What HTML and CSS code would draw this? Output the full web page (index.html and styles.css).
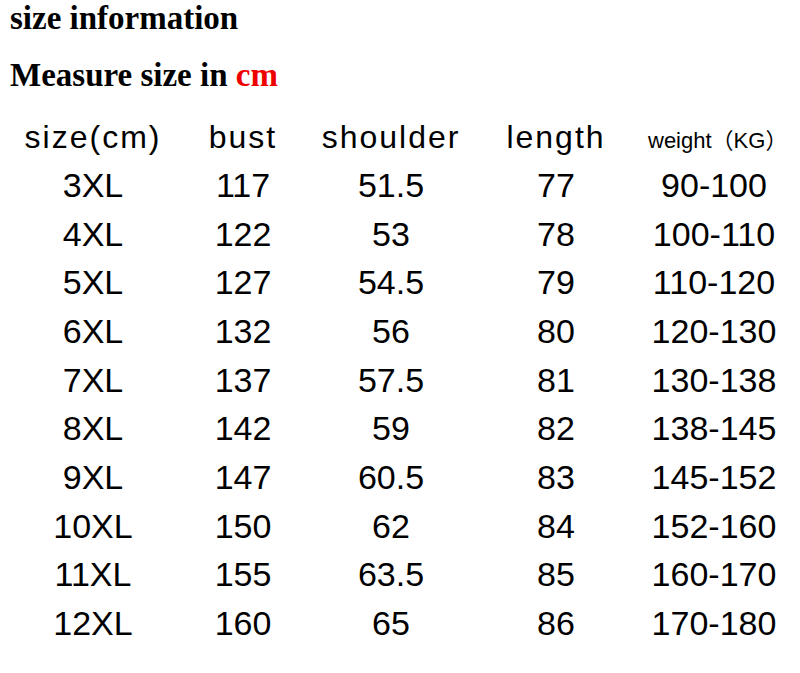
FILE: index.html
```html
<!DOCTYPE html>
<html>
<head>
<meta charset="utf-8">
<link rel="stylesheet" href="styles.css">
</head>
<body>
<h1 class="title">size information</h1>
<h2 class="title title-second">Measure size in <span class="red">cm</span></h2>
<div class="table">
  <div class="row head">
    <div class="cell">size(cm)</div>
    <div class="cell">bust</div>
    <div class="cell">shoulder</div>
    <div class="cell">length</div>
    <div class="cell weight">weight（KG）</div>
  </div>
  <div class="row"><div class="cell">3XL</div><div class="cell">117</div><div class="cell">51.5</div><div class="cell">77</div><div class="cell">90-100</div></div>
  <div class="row"><div class="cell">4XL</div><div class="cell">122</div><div class="cell">53</div><div class="cell">78</div><div class="cell">100-110</div></div>
  <div class="row"><div class="cell">5XL</div><div class="cell">127</div><div class="cell">54.5</div><div class="cell">79</div><div class="cell">110-120</div></div>
  <div class="row"><div class="cell">6XL</div><div class="cell">132</div><div class="cell">56</div><div class="cell">80</div><div class="cell">120-130</div></div>
  <div class="row"><div class="cell">7XL</div><div class="cell">137</div><div class="cell">57.5</div><div class="cell">81</div><div class="cell">130-138</div></div>
  <div class="row"><div class="cell">8XL</div><div class="cell">142</div><div class="cell">59</div><div class="cell">82</div><div class="cell">138-145</div></div>
  <div class="row"><div class="cell">9XL</div><div class="cell">147</div><div class="cell">60.5</div><div class="cell">83</div><div class="cell">145-152</div></div>
  <div class="row"><div class="cell">10XL</div><div class="cell">150</div><div class="cell">62</div><div class="cell">84</div><div class="cell">152-160</div></div>
  <div class="row"><div class="cell">11XL</div><div class="cell">155</div><div class="cell">63.5</div><div class="cell">85</div><div class="cell">160-170</div></div>
  <div class="row"><div class="cell">12XL</div><div class="cell">160</div><div class="cell">65</div><div class="cell">86</div><div class="cell">170-180</div></div>
</div>
</body>
</html>
```
FILE: styles.css
```css
html, body {
  margin: 0;
  padding: 0;
  background: #ffffff;
  color: #000000;
}
body {
  font-family: "Liberation Sans", Arial, sans-serif;
}
.title {
  margin: 0;
  padding-left: 10px;
  font-family: "Liberation Serif", "Times New Roman", serif;
  font-weight: bold;
  font-size: 33px;
  line-height: 37px;
  color: #000;
}
.title-second {
  margin-top: 20px;
}
.red {
  color: #ee0000;
}
.table {
  margin-top: 19px;
  padding-left: 18px;
}
.row {
  display: grid;
  grid-template-columns: 150px 150px 146px 184px 132px;
  grid-template-rows: 48.67px;
  font-size: 34px;
  line-height: 48.67px;
}
.cell {
  text-align: center;
  white-space: nowrap;
}
.head {
  grid-template-rows: 48px;
  align-items: baseline;
  font-size: 32px;
  line-height: 48px;
  letter-spacing: 2px;
}
.head .weight {
  font-size: 22px;
  letter-spacing: 0;
  padding-right: 12px;
  font-family: "Liberation Sans", "Noto Sans CJK SC", sans-serif;
}
```
